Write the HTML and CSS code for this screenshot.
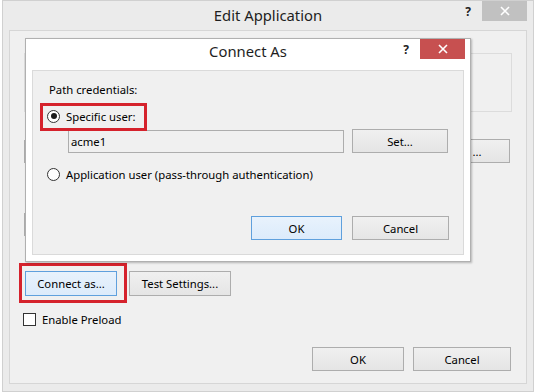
FILE: index.html
```html
<!DOCTYPE html>
<html>
<head>
<meta charset="utf-8">
<link rel="stylesheet" href="styles.css">
</head>
<body>
<div class="window">
  <div class="titlebar">
    <span class="title">Edit Application</span>
    <div class="controls">
      <span class="help">?</span>
      <span class="close inactive"><svg width="10" height="10" viewBox="0 0 10 10"><path d="M1 1L9 9M9 1L1 9" stroke="#fff" stroke-width="1.6"/></svg></span>
    </div>
  </div>
  <div class="client">
    <div class="groupbox"></div>
    <div class="row row1">
      <div class="textbox grow"></div>
      <button class="btn browse">...</button>
    </div>
    <div class="row row2">
      <div class="textbox wide"></div>
    </div>
    <div class="row row3">
      <div class="marked">
        <button class="btn default connect">Connect as...</button>
        <span class="annot annot-connect"></span>
      </div>
      <button class="btn test">Test Settings...</button>
    </div>
    <div class="check-row">
      <span class="checkbox"></span>
      <span>Enable Preload</span>
    </div>
    <div class="footer">
      <button class="btn ok">OK</button>
      <button class="btn cancel">Cancel</button>
    </div>
  </div>
</div>

<div class="dialog">
  <div class="titlebar dlg-titlebar">
    <span class="title">Connect As</span>
    <div class="controls">
      <span class="help">?</span>
      <span class="close active"><svg width="10" height="10" viewBox="0 0 10 10"><path d="M1 1L9 9M9 1L1 9" stroke="#fff" stroke-width="1.6"/></svg></span>
    </div>
  </div>
  <div class="panel">
    <div class="label">Path credentials:</div>
    <div class="radio-row first">
      <span class="radio on"></span>
      <span>Specific user:</span>
      <span class="annot annot-radio"></span>
    </div>
    <div class="user-row">
      <div class="textbox user">acme1</div>
      <button class="btn set">Set...</button>
    </div>
    <div class="radio-row second">
      <span class="radio"></span>
      <span>Application user (pass-through authentication)</span>
    </div>
    <div class="dlg-footer">
      <button class="btn default ok">OK</button>
      <button class="btn cancel">Cancel</button>
    </div>
  </div>
</div>
</body>
</html>
```

FILE: styles.css
```css
* { box-sizing: border-box; }
html, body { margin: 0; padding: 0; }
body {
  width: 535px;
  height: 392px;
  overflow: hidden;
  position: relative;
  background: #fff;
  font-family: "Noto Sans", "Segoe UI", sans-serif;
  font-size: 11.3px;
  color: #000;
}

.window {
  margin-left: 2px;
  width: 532px;
  height: 392px;
  border: 1px solid #d0d0d0;
  background: #ebebeb;
  padding: 0 6px 7px;
  display: flex;
  flex-direction: column;
}

.titlebar {
  height: 29px;
  display: grid;
  grid-template-columns: 1fr auto 1fr;
  align-items: start;
}
.title {
  grid-column: 2;
  font-size: 14.8px;
  line-height: 28px;
  color: #1e1e1e;
}
.controls {
  grid-column: 3;
  justify-self: end;
  display: flex;
  align-items: flex-start;
}
.help {
  font-weight: bold;
  font-size: 12px;
  line-height: 20px;
  color: #222;
  margin-right: 11px;
  margin-top: 1px;
}
.close {
  width: 45px;
  height: 20px;
  display: flex;
  align-items: center;
  justify-content: center;
}
.close.inactive { background: #c1c1c1; }
.close.active { background: #c75050; }

.client {
  flex: 1;
  border: 1px solid #d6d6d6;
  background: #f0f0f0;
  padding: 0 15px 0 14px;
  display: flex;
  flex-direction: column;
}

.groupbox {
  margin-top: 22px;
  margin-right: -1px;
  height: 59px;
  border: 1px solid #dcdcdc;
}

.row { display: flex; align-items: center; }
.row1 { margin-top: 27px; height: 24px; }
.row2 { margin-top: 49px; height: 24px; }
.row3 { margin-top: 35px; height: 25px; }

.textbox {
  height: 23px;
  border: 1px solid #adadad;
  background: #f0f0f0;
}
.grow { flex: 1; }
.wide { width: 400px; }

.btn {
  font: inherit;
  color: #000;
  height: 24px;
  padding: 0;
  border: 1px solid #adadad;
  border-radius: 0;
  background: linear-gradient(#f0f0f0, #e5e5e5);
}
.btn.default {
  border-color: #5fa0dd;
  background: linear-gradient(#e8f2fc, #dcebfb);
}
.browse { width: 66px; margin-left: 8px; margin-right: 1px; }

.marked { position: relative; margin-left: 1px; }
.connect { width: 92px; height: 25px; display: block; }
.test { width: 102px; height: 25px; margin-left: 12px; }

.annot {
  position: absolute;
  border: 3px solid #d5222c;
  pointer-events: none;
}
.annot-connect { left: -6px; top: -8px; width: 108px; height: 40px; }

.check-row {
  margin-top: 15px;
  height: 16px;
  display: flex;
  align-items: center;
  gap: 6px;
  margin-left: -1px;
}
.checkbox {
  width: 13px;
  height: 13px;
  border: 1px solid #333;
  background: #fff;
}

.footer {
  margin-top: 20px;
  display: flex;
  justify-content: flex-end;
  gap: 9px;
}
.ok { width: 92px; }
.cancel { width: 98px; }

/* Connect As dialog overlay */
.dialog {
  position: absolute;
  left: 25px;
  top: 38px;
  width: 446px;
  border: 1px solid #b0b0b0;
  background: #fff;
  padding: 0 6px 6px;
  box-shadow: 1px 1px 2px rgba(0, 0, 0, 0.25);
}
.dlg-titlebar { height: 31px; }
.dlg-titlebar .title { line-height: 24px; }
.dlg-titlebar .controls { margin-right: -1px; }

.panel {
  border: 1px solid #dadada;
  background: #f0f0f0;
  padding: 0 14px 14px;
}
.label { margin-top: 11px; margin-left: 2px; line-height: 16px; }
.radio-row {
  position: relative;
  height: 16px;
  display: flex;
  align-items: center;
  gap: 6px;
}
.radio-row.first { margin-top: 10px; }
.radio-row.second { margin-top: 13px; }
.radio {
  width: 13px;
  height: 13px;
  border: 1px solid #333;
  border-radius: 50%;
  background: #fff;
  display: flex;
  align-items: center;
  justify-content: center;
}
.radio.on::after {
  content: "";
  width: 6px;
  height: 6px;
  border-radius: 50%;
  background: #1a1a1a;
}
.annot-radio { left: -7px; top: -5px; width: 107px; height: 28px; }

.user-row {
  margin-top: 5px;
  height: 24px;
  display: flex;
  align-items: center;
}
.textbox.user {
  margin-left: 21px;
  width: 276px;
  line-height: 21px;
  padding-left: 2px;
}
.set { width: 96px; margin-left: 8px; }

.dlg-footer {
  margin-top: 34px;
  display: flex;
  justify-content: flex-end;
  gap: 10px;
}
.dlg-footer .ok { width: 91px; }
.dlg-footer .cancel { width: 97px; }
```
